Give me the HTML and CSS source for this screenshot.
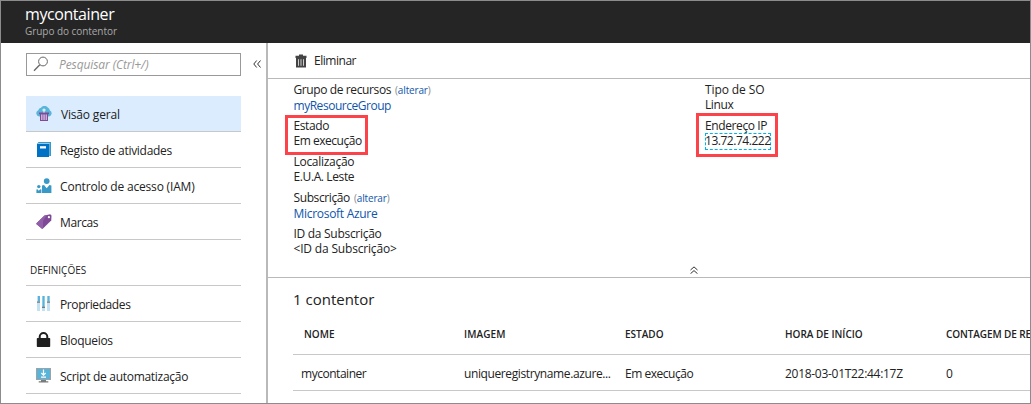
FILE: index.html
```html
<!DOCTYPE html>
<html lang="pt">
<head>
<meta charset="utf-8">
<title>mycontainer</title>
<link rel="stylesheet" href="styles.css">
</head>
<body>
<div class="window">
  <header class="header">
    <h1 class="header-title">mycontainer</h1>
    <div class="header-sub">Grupo do contentor</div>
  </header>
  <div class="body">
    <nav class="sidebar">
      <div class="search-row">
        <div class="search">
          <svg class="search-icon" width="16" height="16" viewBox="0 0 16 16" fill="none" stroke="#666"><circle cx="10" cy="5.5" r="4.4"/><path d="M6.8 8.8L1 14.7" stroke-width="1.3"/></svg>
          <span class="ls-xs">Pesquisar (Ctrl+/)</span>
        </div>
        <svg class="collapse" width="8" height="8" viewBox="0 0 8 8" fill="none" stroke="#333"><path d="M3.7.5L.8 4l2.900 3.500M7.500.5L4.600 4l2.900 3.500"/></svg>
      </div>
      <ul class="menu">
        <li class="item item-active">
          <svg width="16" height="16" viewBox="0 0 16 16"><path d="M3 10.500A3.300 3.300 0 0 1 2.300 4.200 3.500 3.500 0 0 1 5 1.800 4.200 4.200 0 0 1 11.800 1.500 3.600 3.600 0 0 1 13.800 4.600 3.100 3.100 0 0 1 13 10.500z" fill="#59b4d9"/><path d="M4 8.500h8V15H4z" fill="#eadcf2"/><path d="M3 6.500h10v1.800H3zM4 8h1.300v7H4zM6.400 8h1.100v6H6.400zM8.600 8h1.100v6H8.600zM10.700 8H12v7h-1.300zM4 14h8v1H4z" fill="#804998"/><path d="M7.500 2.500h1v1h1.200v1H8.500v2h-1v-2H6.300v-1h1.200z" fill="#fff"/></svg>
          <span class="ls-s">Visão geral</span>
        </li>
        <li class="item">
          <svg width="16" height="16" viewBox="0 0 16 16"><path d="M2.500 0H15v14h-1.800V2H1z" fill="#3999c6"/><path d="M1 2h12v13H1z" fill="#0072c6"/><path d="M2.300 1h11.500v.8H1.500z" fill="#b5dcf0"/><path d="M4 4.200h6v2.300H4z" fill="#fff"/></svg>
          <span class="ls-m">Registo de atividades</span>
        </li>
        <li class="item">
          <svg width="16" height="16" viewBox="0 0 16 16" fill="#3999c6"><circle cx="10.700" cy="3.100" r="2.900"/><path d="M6 7.500l2-.4 2.700 3.100 2.700-3.100 2 .4V15H6z"/><circle cx="2.800" cy="8.600" r="1.700"/><path d="M.4 11.600l1-.4 1.400 1.500 1.400-1.500 1.200.4V15h-5z"/></svg>
          <span class="ls-s">Controlo de acesso (IAM)</span>
        </li>
        <li class="item">
          <svg width="16" height="16" viewBox="0 0 16 16"><path d="M.5 9.300L8.500 1.400 14.200.2l1.300 1.200-.3 5L7 14.500l-1 .3L.3 10z" fill="#804998"/><path d="M.5 9.300L8.500 1.400 11 .9 7 7v7.500l-1 .3L.3 10z" fill="#905fa8"/><circle cx="12.900" cy="3.200" r="1.100" fill="#fff"/></svg>
          <span class="ls-l">Marcas</span>
        </li>
      </ul>
      <h2 class="menu-heading">DEFINIÇÕES</h2>
      <ul class="menu">
        <li class="item">
          <svg width="16" height="16" viewBox="0 0 16 16"><path d="M1 0h3v15H1zM6 0h3v15H6zM11 0h3v15h-3z" fill="#c2e2f3"/><path d="M2 0h2v5.500H2zM6.500 0h2v11h-2zM11.500 0h2v5.500h-2z" fill="#59b4d9"/><path d="M1 5.500h3v1.300H1zM6 10.700h3V12H6zM11 5.500h3v1.300h-3z" fill="#7a7a7a"/></svg>
          <span class="ls-l">Propriedades</span>
        </li>
        <li class="item">
          <svg width="16" height="16" viewBox="0 0 16 16"><path d="M3.700 8V4.800a3.800 3.800 0 0 1 7.600 0V8" fill="none" stroke="#1f1f1f" stroke-width="2"/><rect x=".8" y="6" width="13.400" height="9" rx=".7" fill="#1f1f1f"/></svg>
          <span class="ls-m">Bloqueios</span>
        </li>
        <li class="item">
          <svg width="16" height="16" viewBox="0 0 16 16"><path d="M0 0h15v12H0z" fill="#a0a1a2"/><path d="M1 1h13v10H1z" fill="#59b4d9"/><path d="M5 12h5v1.300h2.300V14.500H2.700v-1.200H5z" fill="#7a7a7a"/><path d="M7.500 1.500v5.800M5.300 5L7.500 7.200 9.700 5M5 9.200h5" fill="none" stroke="#fff" stroke-width="1.200"/></svg>
          <span class="ls-m">Script de automatização</span>
        </li>
      </ul>
    </nav>
    <main class="main">
      <div class="toolbar">
        <svg width="12" height="14" viewBox="0 0 12 14"><path d="M4 .5h4v1.300h3.500V4H.5V1.800H4z" fill="#444"/><path d="M1 4h10v9.500H1z" fill="#444"/><path d="M3.500 5.200v6.600M6 5.200v6.600M8.500 5.200v6.600" stroke="#ddd" stroke-width=".9"/></svg>
        <span class="ls-xl">Eliminar</span>
      </div>
      <section class="essentials">
        <dl class="props">
          <div class="prop"><dt><span class="ls-l">Grupo de recursos</span><span class="change">(<a>alterar</a>)</span></dt><dd class="ls-xl"><a>myResourceGroup</a></dd></div>
          <div class="prop marked mark-state"><dt class="ls-l">Estado</dt><dd class="ls-xl">Em execução</dd></div>
          <div class="prop"><dt class="ls-m">Localização</dt><dd class="ls-l">E.U.A. Leste</dd></div>
          <div class="prop"><dt><span class="ls-l">Subscrição</span><span class="change">(<a>alterar</a>)</span></dt><dd class="ls-m"><a>Microsoft Azure</a></dd></div>
          <div class="prop"><dt class="ls-m">ID da Subscrição</dt><dd class="ls-s">&lt;ID da Subscrição&gt;</dd></div>
        </dl>
        <dl class="props">
          <div class="prop"><dt class="ls-xs">Tipo de SO</dt><dd class="ls-l">Linux</dd></div>
          <div class="prop marked mark-ip"><dt class="ls-l">Endereço IP</dt><dd class="ls-xl"><span class="focus">13.72.74.222</span></dd></div>
        </dl>
        <svg class="fold" width="8" height="8" viewBox="0 0 8 8" fill="none" stroke="#333"><path d="M.5 4L4 .9 7.500 4M.5 7.700L4 4.600l3.500 3.100"/></svg>
      </section>
      <section class="containers">
        <h2 class="list-title">1 contentor</h2>
        <div class="row row-head"><span class="name">NOME</span><span class="wide">IMAGEM</span><span>ESTADO</span><span>HORA DE INÍCIO</span><span class="count">CONTAGEM DE RE</span></div>
        <div class="row"><span class="ls-xl">mycontainer</span><span class="ls-l">uniqueregistryname.azure...</span><span class="ls-xl">Em execução</span><span class="ls-m">2018-03-01T22:44:17Z</span><span>0</span></div>
      </section>
    </main>
  </div>
</div>
</body>
</html>
```
FILE: styles.css
```css
*, *::after { box-sizing: border-box; }
body { margin: 0; background: #fff; color: #222; font: 12px/15px "Open Sans", "Noto Sans", sans-serif; }
h1, h2, ul, dl, dd { margin: 0; padding: 0; font-weight: 400; list-style: none; }
svg { display: block; flex: none; }
a { color: #0f55ab; }

.ls-xs { letter-spacing: -.1px; }
.ls-s { letter-spacing: -.18px; }
.ls-m { letter-spacing: -.29px; }
.ls-l { letter-spacing: -.39px; }
.ls-xl { letter-spacing: -.47px; }

.window { width: 1031px; height: 404px; border: 1px solid #8c8c8c; display: flex; flex-direction: column; overflow: hidden; }
.header { height: 42px; flex: none; padding: 3px 24px 0; background: #252525; }
.header-title { color: #fff; font-size: 16px; line-height: 20px; letter-spacing: -.42px; }
.header-sub { color: #a9a9a9; font-size: 10px; line-height: 14px; letter-spacing: -.05px; font-weight: 500; }
.body { flex: 1; display: flex; min-height: 0; }

.sidebar { width: 267px; flex: none; padding: 10px 0 0 25px; border-right: 2px solid #b9b9b9; }
.search-row { display: flex; align-items: center; gap: 12px; }
.search { width: 215px; height: 23px; display: flex; align-items: center; gap: 10px; padding: 0 0 1px 6px; border: 1px solid #999; color: #999; font-style: italic; }
.search-icon { margin-top: -1px; }
.collapse { margin-top: -2px; }
.menu { width: 215px; }
.search-row + .menu { margin-top: 20px; }
.item { height: 36px; display: flex; align-items: center; gap: 8px; padding: 1px 0 0 10px; border-bottom: 1px solid #c8c8c8; }
.item-active { background: #daecfe; gap: 9px; }
.menu-heading { width: 215px; height: 46px; padding: 23px 4px 0; border-bottom: 1px solid #c8c8c8; font-size: 10px; line-height: 15px; }

.main { flex: 1; min-width: 0; }
.toolbar { height: 36px; display: flex; align-items: center; gap: 7px; padding-left: 27px; border-bottom: 1px solid #b9b9b9; }
.essentials { position: relative; height: 199px; display: grid; grid-template-columns: 411.5px 1fr; padding: 3px 0 0 25.5px; border-bottom: 1px solid #b9b9b9; }
.props { display: flex; flex-direction: column; gap: 6px; }
.prop { height: 30px; }
.change { margin-left: 4px; color: #888; font-size: 10px; letter-spacing: -.15px; }
.change a { font-weight: 500; }
.marked { position: relative; }
.marked::after { content: ""; position: absolute; border: 3px solid #fc4349; }
.mark-state::after { left: -8.5px; top: -3px; width: 83px; height: 40px; }
.mark-ip::after { left: -9px; top: -5px; width: 82px; height: 44px; }
.focus { display: block; width: 66px; height: 17px; border: 1px dashed #00b4ee; line-height: 13px; text-indent: -1px; white-space: nowrap; }
.fold { position: absolute; left: 422px; top: 187px; }

.containers { padding-left: 25px; }
.list-title { padding-top: 11px; font-size: 15px; line-height: 20px; }
.row { height: 36px; display: grid; grid-template-columns: 163px 161px 160px 161px 1fr; align-items: center; padding: 2px 0 0 8px; border-bottom: 1px solid #c8c8c8; white-space: nowrap; }
.row-head { height: 46px; padding-top: 6px; font-size: 10px; font-weight: 600; }
.row-head .name { padding-left: 3px; }
.row-head .wide { letter-spacing: .1px; }
.row-head .count { letter-spacing: -.1px; }
```
